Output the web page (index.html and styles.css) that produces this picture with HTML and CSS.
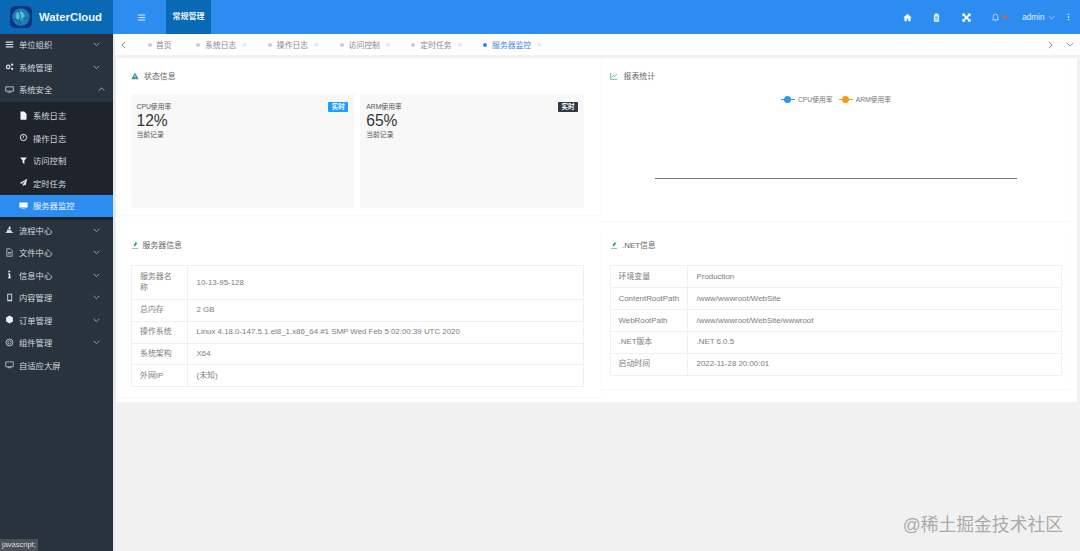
FILE: index.html
```html
<!DOCTYPE html>
<html lang="zh-CN">
<head>
    <meta charset="UTF-8">
    <title>WaterCloud</title>
    <link rel="stylesheet" href="styles.css">
</head>
<body>
    <div class="header">
        <div class="logo">
            <svg class="logo-mark" viewBox="0 0 24 24">
                <rect width="24" height="24" rx="6" fill="#14347f"/>
                <circle cx="12" cy="12" r="9.5" fill="#157fb6"/>
                <circle cx="11" cy="11" r="5" fill="#4fbfd6"/>
                <path d="M3.500 15c3-2 5 2 8 0s5-3 9-1M10 4c-2 3 3 6 1 9s-1 5 1 7" stroke="#0f5596" stroke-width="1" fill="none"/>
            </svg>
            <span class="logo-text">WaterCloud</span>
        </div>
        <div class="nav-toggle">
            <svg class="nav-ico" viewBox="0 0 12 10"><path d="M1 1h10v1.200H1zM3 4.400h8v1.200H3zM1 7.800h10V9H1zM1 4.400h1v1.200H1z" fill="#e4f0fd"/></svg>
        </div>
        <div class="nav-current">常规管理</div>
        <div class="nav-right">
            <svg class="nav-ico" viewBox="0 0 12 12"><path d="M6 1 .6 6l.7.7L2 6.100V11h3V7.500h2V11h3V6.100l.7.6.7-.7z" fill="#fff"/></svg>
            <svg class="nav-ico" viewBox="0 0 12 12"><path d="M4 .5h4l1.500 2.500v8.500h-7V3zM4 5h4v1H4zM4 7.500h4v1H4z" fill="#d7e9fc" fill-rule="evenodd"/></svg>
            <svg class="nav-ico" viewBox="0 0 12 12"><path d="M.5.5h4.200L3.500 1.700 6 4.200l2.500-2.500L7.300.5h4.200v4.200l-1.200-1.200L7.800 6l2.500 2.500 1.200-1.200v4.200H7.300l1.200-1.200L6 7.800l-2.500 2.500 1.200 1.200H.5V7.300l1.200 1.200L4.200 6 1.700 3.500.5 4.700z" fill="#fff"/></svg>
            <span class="bell">
                <svg class="nav-ico" viewBox="0 0 12 12"><path d="M6 1.500a3 3 0 0 0-3 3v3L2 9h8L9 7.500v-3a3 3 0 0 0-3-3zM5 10.200h2" stroke="#e4f0fd" stroke-width=".9" fill="none"/></svg>
                <i class="bell-dot"></i>
            </span>
            <span class="user">admin
                <svg class="caret" viewBox="0 0 10 6"><path d="M1 1l4 4 4-4" stroke="#e4f0fd" fill="none"/></svg>
            </span>
            <svg class="more" viewBox="0 0 4 12"><path d="M1 1h2v2H1zM1 5h2v2H1zM1 9h2v2H1z" fill="#e4f0fd"/></svg>
        </div>
    </div>

    <div class="layout">
        <ul class="sidebar">
            <li class="menu-item">
                <svg class="menu-ico" viewBox="0 0 12 12"><path d="M1 2h10v1.600H1zM1 5.200h10v1.600H1zM1 8.400h10V10H1z" fill="#dfe3e7"/></svg>
                单位组织
                <svg class="arrow" viewBox="0 0 10 6"><path d="M1 1l4 4 4-4" stroke="#b9c0c7" stroke-width="1.100" fill="none"/></svg>
            </li>
            <li class="menu-item">
                <svg class="menu-ico" viewBox="0 0 12 12"><circle cx="4.200" cy="6.500" r="2.300" stroke="#e8ebee" stroke-width="1.500" fill="none"/><circle cx="9.500" cy="3.500" r="1.500" fill="#e8ebee"/><circle cx="9.500" cy="9" r="1.500" fill="#e8ebee"/></svg>
                系统管理
                <svg class="arrow" viewBox="0 0 10 6"><path d="M1 1l4 4 4-4" stroke="#b9c0c7" stroke-width="1.100" fill="none"/></svg>
            </li>
            <li class="menu-item open">
                <svg class="menu-ico" viewBox="0 0 12 12"><path d="M.5 2h11v6.500H.5zM1.500 3v4.500h9V3zM3.500 9.500h5v.8h-5z" fill="#dfe3e7" fill-rule="evenodd"/></svg>
                系统安全
                <svg class="arrow shifted" viewBox="0 0 10 6"><path d="M1 5l4-4 4 4" stroke="#c9ced3" stroke-width="1.100" fill="none"/></svg>
            </li>
            <li class="submenu">
                <ul>
                    <li class="sub-item">
                        <svg class="menu-ico" viewBox="0 0 12 12"><path d="M2 .5h5L10 3.500v8H2z" fill="#f2f3f4"/></svg>
                        系统日志
                    </li>
                    <li class="sub-item">
                        <svg class="menu-ico" viewBox="0 0 12 12"><circle cx="6" cy="6" r="4.200" stroke="#eceef0" stroke-width="1.300" fill="none"/><path d="M6 3.500V6L4.500 7" stroke="#eceef0" fill="none"/></svg>
                        操作日志
                    </li>
                    <li class="sub-item">
                        <svg class="menu-ico" viewBox="0 0 12 12"><path d="M1.500 2h9L7.200 6v4.500L4.800 9V6z" fill="#f2f3f4"/></svg>
                        访问控制
                    </li>
                    <li class="sub-item">
                        <svg class="menu-ico" viewBox="0 0 12 12"><path d="M11 1 1 6.500l2.500 1L9 3.500 5 8.200V11l1.800-2 2 1z" fill="#e8ebee"/></svg>
                        定时任务
                    </li>
                    <li class="sub-item active">
                        <svg class="menu-ico" viewBox="0 0 12 12"><path d="M.5 2h11v6.500H.5zM3.500 9.500h5v.8h-5z" fill="#fff"/></svg>
                        服务器监控
                    </li>
                </ul>
            </li>
            <li class="menu-item">
                <svg class="menu-ico" viewBox="0 0 12 12"><path d="M6.500 1 8 4.500 6 6 4 5zM3 6l5 .5 1.500 3H11v1.200H1v-1.200h1z" fill="#d3d8dc"/></svg>
                流程中心
                <svg class="arrow" viewBox="0 0 10 6"><path d="M1 1l4 4 4-4" stroke="#b9c0c7" stroke-width="1.100" fill="none"/></svg>
            </li>
            <li class="menu-item">
                <svg class="menu-ico" viewBox="0 0 12 12"><path d="M2.500 1h4.500l2.500 2.500V11h-7zM4 6h4M4 8h4" stroke="#d3d8dc" fill="none"/></svg>
                文件中心
                <svg class="arrow" viewBox="0 0 10 6"><path d="M1 1l4 4 4-4" stroke="#b9c0c7" stroke-width="1.100" fill="none"/></svg>
            </li>
            <li class="menu-item">
                <svg class="menu-ico" viewBox="0 0 12 12"><path d="M4.500 1h2.400v2H4.500zM4 4.500h3v5h1V11H4V9.500h1v-3.500H4z" fill="#eceef0"/></svg>
                信息中心
                <svg class="arrow" viewBox="0 0 10 6"><path d="M1 1l4 4 4-4" stroke="#b9c0c7" stroke-width="1.100" fill="none"/></svg>
            </li>
            <li class="menu-item">
                <svg class="menu-ico" viewBox="0 0 12 12"><path d="M3 1h6.500v10H3zM4.200 2.200v6.800h4.100V2.200z" fill="#d3d8dc" fill-rule="evenodd"/></svg>
                内容管理
                <svg class="arrow" viewBox="0 0 10 6"><path d="M1 1l4 4 4-4" stroke="#b9c0c7" stroke-width="1.100" fill="none"/></svg>
            </li>
            <li class="menu-item">
                <svg class="menu-ico" viewBox="0 0 12 12"><path d="M6 .8 10.500 3.400v5.200L6 11.200 1.500 8.600V3.400z" fill="#eceef0"/></svg>
                订单管理
                <svg class="arrow" viewBox="0 0 10 6"><path d="M1 1l4 4 4-4" stroke="#b9c0c7" stroke-width="1.100" fill="none"/></svg>
            </li>
            <li class="menu-item">
                <svg class="menu-ico" viewBox="0 0 12 12"><circle cx="6" cy="6" r="4.600" stroke="#d3d8dc" stroke-width="1.100" fill="none"/><circle cx="6" cy="6" r="2.200" stroke="#d3d8dc" fill="none"/></svg>
                组件管理
                <svg class="arrow" viewBox="0 0 10 6"><path d="M1 1l4 4 4-4" stroke="#b9c0c7" stroke-width="1.100" fill="none"/></svg>
            </li>
            <li class="menu-item">
                <svg class="menu-ico" viewBox="0 0 12 12"><path d="M1 2.500h10v6.500H1zM3.500 10.300h5" stroke="#d3d8dc" fill="none"/></svg>
                自适应大屏
            </li>
        </ul>

        <div class="main">
            <div class="tabs">
                <svg class="tab-arrow" viewBox="0 0 6 10"><path d="M5 1 1 5l4 4" stroke="#666" fill="none"/></svg>
                <ul class="tab-list">
                    <li class="tab home"><i class="dot"></i>首页</li>
                    <li class="tab"><i class="dot"></i>系统日志<span class="close">×</span></li>
                    <li class="tab"><i class="dot"></i>操作日志<span class="close">×</span></li>
                    <li class="tab"><i class="dot"></i>访问控制<span class="close">×</span></li>
                    <li class="tab"><i class="dot"></i>定时任务<span class="close">×</span></li>
                    <li class="tab current"><i class="dot"></i>服务器监控<span class="close">×</span></li>
                </ul>
                <svg class="tab-arrow" viewBox="0 0 6 10"><path d="M1 1l4 4-4 4" stroke="#666" fill="none"/></svg>
                <svg class="tab-down" viewBox="0 0 10 6"><path d="M1 1l4 4 4-4" stroke="#777" fill="none"/></svg>
            </div>

            <div class="content">
                <div class="col">
                    <div class="card card-status">
                        <div class="card-title">
                            <svg class="title-ico" viewBox="0 0 12 12"><path d="M6 .8 11.500 11H.5z" fill="#2a9d8f"/><path d="M5.500 4.500h1v3.500h-1zM5.500 8.800h1v1h-1z" fill="#fff"/></svg>
                            状态信息
                        </div>
                        <div class="stats">
                            <div class="stat">
                                <span class="badge blue">实时</span>
                                <div class="stat-name">CPU使用率</div>
                                <div class="stat-value">12%</div>
                                <div class="stat-note">当前记录</div>
                            </div>
                            <div class="stat">
                                <span class="badge dark">实时</span>
                                <div class="stat-name">ARM使用率</div>
                                <div class="stat-value">65%</div>
                                <div class="stat-note">当前记录</div>
                            </div>
                        </div>
                    </div>
                    <div class="card card-table">
                        <div class="card-title">
                            <svg class="title-ico" viewBox="0 0 12 12"><path d="M7.500 1 9 4 6 8H4.500L4 6z" fill="#2a9d8f"/><path d="M1.500 10.500h9v.8h-9z" fill="#2a9d8f"/></svg>
                            服务器信息
                        </div>
                        <table class="info left">
                            <tr><td class="key">服务器名称</td><td>10-13-95-128</td></tr>
                            <tr><td class="key">总内存</td><td>2 GB</td></tr>
                            <tr><td class="key">操作系统</td><td>Linux 4.18.0-147.5.1.el8_1.x86_64 #1 SMP Wed Feb 5 02:00:39 UTC 2020</td></tr>
                            <tr><td class="key">系统架构</td><td>X64</td></tr>
                            <tr><td class="key">外网IP</td><td>(未知)</td></tr>
                        </table>
                    </div>
                </div>
                <div class="col">
                    <div class="card card-chart">
                        <div class="card-title">
                            <svg class="title-ico" viewBox="0 0 12 12"><path d="M1 1.500v9.500h10" stroke="#2a9d8f" fill="none"/><path d="M2.500 8 5 5l2 1.500L10.500 3" stroke="#2a9d8f" fill="none"/></svg>
                            报表统计
                        </div>
                        <div class="legend">
                            <span class="legend-item"><i class="swatch cpu"></i>CPU使用率</span>
                            <span class="legend-item"><i class="swatch arm"></i>ARM使用率</span>
                        </div>
                        <div class="axis"></div>
                    </div>
                    <div class="card card-table">
                        <div class="card-title">
                            <svg class="title-ico" viewBox="0 0 12 12"><path d="M7.500 1 9 4 6 8H4.500L4 6z" fill="#2a9d8f"/><path d="M1.500 10.500h9v.8h-9z" fill="#2a9d8f"/></svg>
                            .NET信息
                        </div>
                        <table class="info right">
                            <tr><td class="key">环境变量</td><td>Production</td></tr>
                            <tr><td class="key">ContentRootPath</td><td>/www/wwwroot/WebSite</td></tr>
                            <tr><td class="key">WebRootPath</td><td>/www/wwwroot/WebSite/wwwroot</td></tr>
                            <tr><td class="key">.NET版本</td><td>.NET 6.0.5</td></tr>
                            <tr><td class="key">启动时间</td><td>2022-11-28 20:00:01</td></tr>
                        </table>
                    </div>
                </div>
            </div>
        </div>
    </div>

    <div class="status-tip">javascript;</div>
    <div class="watermark">@稀土掘金技术社区</div>
</body>
</html>
```

FILE: styles.css
```css
* {
    padding: 0px;
    margin: 0px;
    list-style: none;
    box-sizing: border-box;
}
html, body {
    height: 100%;
    overflow: hidden;
}
body {
    background-color: #f1f1f1;
    font-family: "Liberation Sans", "Noto Sans CJK SC", sans-serif;
    font-size: 7.9px;
    color: #666;
}
svg {
    display: block;
    flex: none;
}

/* header */
.header {
    display: flex;
    align-items: center;
    height: 34px;
    background-color: #2d8cf0;
}
.logo {
    display: flex;
    align-items: center;
    width: 113px;
    height: 34px;
    padding-left: 10px;
    background-color: #0a69b4;
}
.logo-mark {
    width: 22px;
    height: 22px;
}
.logo-text {
    margin-left: 7px;
    font-size: 11.3px;
    font-weight: bold;
    color: #eef6fd;
}
.nav-toggle {
    padding: 0px 20px 0px 24px;
}
.nav-ico {
    width: 9px;
    height: 9px;
}
.nav-current {
    width: 45px;
    height: 34px;
    line-height: 34px;
    text-align: center;
    font-size: 8px;
    font-weight: bold;
    color: #e8f2fc;
    background-color: #0a69b4;
}
.nav-right {
    display: flex;
    align-items: center;
    gap: 20.5px;
    margin-left: auto;
    padding-right: 10px;
    font-size: 8.2px;
    color: #e4f0fd;
}
.bell {
    display: flex;
    align-items: center;
    gap: 3px;
}
.bell-dot {
    width: 4px;
    height: 4px;
    border-radius: 50%;
    background-color: #ee5a3c;
}
.user {
    display: flex;
    align-items: center;
    gap: 3px;
    margin-left: -5.5px;
}
.caret {
    width: 7px;
    height: 5px;
}
.more {
    width: 3px;
    height: 8px;
    margin-left: -8px;
}

/* sidebar */
.layout {
    display: flex;
    height: 517px;
}
.sidebar {
    width: 115px;
    flex: none;
    background-color: #28333e;
    border-right: 2px solid #e3e9ee;
    font-size: 8.3px;
    color: #d5d9dd;
}
.menu-item {
    display: flex;
    align-items: center;
    height: 22.5px;
    padding-left: 5px;
    padding-bottom: 2px;
    background-color: #28333e;
}
.menu-item .menu-ico {
    margin-right: 5px;
}
.menu-ico {
    width: 9px;
    height: 9px;
}
.arrow {
    width: 7px;
    height: 4.5px;
    margin-left: auto;
    margin-right: 13px;
}
.arrow.shifted {
    margin-right: 8.5px;
}
.submenu {
    padding-top: 3px;
    padding-bottom: 2.5px;
    background-color: #1d242c;
}
.sub-item {
    display: flex;
    align-items: center;
    height: 22.5px;
    padding-left: 19px;
    padding-bottom: 1.5px;
}
.sub-item .menu-ico {
    margin-right: 5px;
}
.sub-item.active {
    background-color: #2d8cf0;
    color: #f2f7fd;
}

/* tabs */
.main {
    flex: 1;
    min-width: 0;
}
.tabs {
    display: flex;
    align-items: center;
    height: 21px;
    padding: 0px 6px 0px 5.5px;
    background-color: #fff;
    font-size: 7.8px;
    color: #888;
}
.tab-arrow {
    width: 5px;
    height: 8px;
}
.tab-list {
    display: flex;
    flex: 1;
    padding-left: 22.5px;
}
.tab {
    display: flex;
    align-items: center;
    margin-right: 21px;
}
.tab.home {
    margin-right: 24.5px;
}
.tab.home .dot {
    margin-right: 4px;
}
.dot {
    width: 4px;
    height: 4px;
    margin-right: 5px;
    border-radius: 50%;
    background-color: #ccc;
}
.close {
    margin-left: 6px;
    color: #c9c9c9;
}
.tab.current {
    color: #4a86e0;
}
.tab.current .dot {
    background-color: #3a7fe6;
}
.tab-down {
    width: 8px;
    height: 5px;
    margin-left: 13px;
}

/* content */
.content {
    display: flex;
    height: 344px;
    margin: 3px 3px 0px 1px;
    background-color: #fff;
}
.col {
    flex: none;
    width: 485px;
}
.col + .col {
    width: 469px;
}
.card {
    padding: 0px 17px 0px 14.5px;
    box-shadow: 0px 1px 2px rgba(0, 0, 0, 0.04);
}
.col + .col .card {
    padding-left: 9px;
    padding-right: 8px;
}
.card-title {
    display: flex;
    align-items: center;
    gap: 5.5px;
    height: 36px;
    padding-bottom: 1px;
    color: #666;
}
.title-ico {
    width: 8px;
    height: 8px;
}
.card-status {
    height: 157px;
}
.card-chart {
    height: 163px;
}
.card-table {
    height: 164px;
    margin-top: 18px;
}
.col + .col .card-table {
    margin-top: 12px;
    height: 156px;
}
.card-table .card-title {
    gap: 4px;
    height: 24px;
    margin-bottom: 8.2px;
}

/* status boxes */
.stats {
    display: flex;
    gap: 6px;
}
.stat {
    position: relative;
    flex: 1;
    height: 114px;
    padding: 8px 6px;
    background-color: #f8f8f8;
    color: #555;
}
.stat-name {
    font-size: 6.8px;
    line-height: 9px;
}
.stat-value {
    font-size: 15.6px;
    line-height: 19px;
    color: #333;
}
.stat-note {
    font-size: 6.8px;
    line-height: 9px;
}
.badge {
    position: absolute;
    top: 8px;
    right: 6px;
    width: 20px;
    height: 9.5px;
    border-radius: 1px;
    line-height: 9.5px;
    text-align: center;
    font-size: 6.5px;
    font-weight: bold;
    color: #fff;
}
.badge.blue {
    background-color: #1e9fff;
}
.badge.dark {
    background-color: #2f3a48;
}

/* chart */
.legend {
    display: flex;
    justify-content: center;
    gap: 6px;
    height: 10px;
    font-size: 6.8px;
    color: #777;
}
.legend-item {
    display: flex;
    align-items: center;
    gap: 3px;
}
.swatch {
    position: relative;
    width: 14px;
    height: 1px;
}
.swatch::after {
    content: "";
    position: absolute;
    top: -3px;
    left: 3.5px;
    width: 7px;
    height: 7px;
    border-radius: 50%;
    background-color: inherit;
}
.swatch.cpu {
    background-color: #2e96ea;
}
.swatch.arm {
    background-color: #f59a13;
}
.axis {
    height: 1px;
    margin: 74px 45px 0px 45px;
    background-color: #777;
}

/* tables */
.info {
    width: 100%;
    border-collapse: collapse;
    border: 1px solid #f0f0f0;
    table-layout: fixed;
}
.info td {
    padding: 4.6px 8.5px;
    border-top: 1px solid #f0f0f0;
    line-height: 11.7px;
    color: #7c7c7c;
}
.info .key {
    border-right: 1px solid #f0f0f0;
}
.info.left .key {
    width: 56.5px;
    padding-left: 8.5px;
    padding-right: 11px;
}
.info.right .key {
    width: 77px;
    padding-left: 7.5px;
    padding-right: 5px;
}

/* overlays */
.status-tip {
    position: absolute;
    left: 0px;
    bottom: 0px;
    height: 12px;
    padding: 0px 2px;
    line-height: 12px;
    font-size: 7.5px;
    color: #ddd;
    background-color: #4a5159;
}
.watermark {
    position: absolute;
    right: 17px;
    bottom: 15px;
    font-size: 17.8px;
    color: #aaa;
}
```
